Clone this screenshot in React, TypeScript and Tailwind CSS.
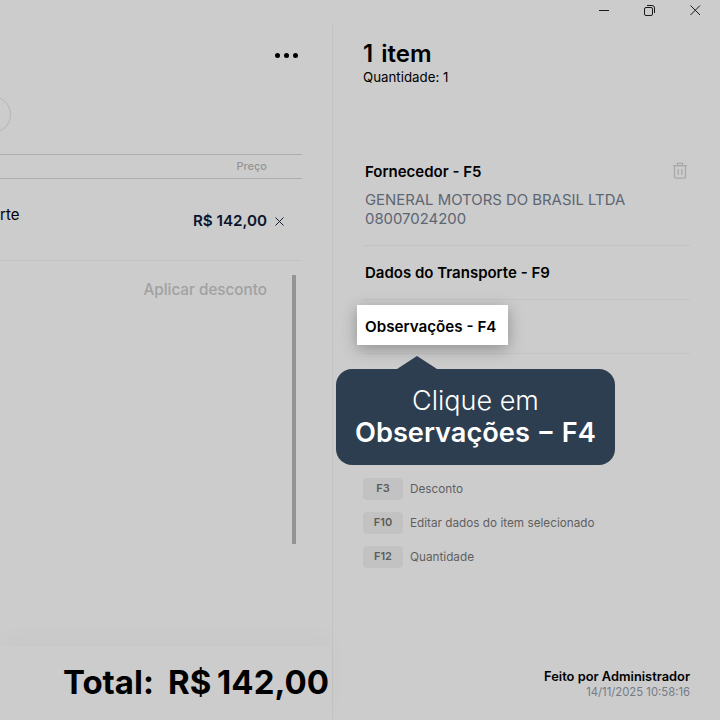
import { X } from "lucide-react";

const shortcuts = [
  { key: "F3", label: "Desconto" },
  { key: "F10", label: "Editar dados do item selecionado" },
  { key: "F12", label: "Quantidade" },
];

function WindowControls() {
  return (
    <div className="h-6 flex justify-end items-start shrink-0">
      <svg width="140" height="20" viewBox="0 0 140 20" fill="none" stroke="#1a1a1a" strokeWidth="1">
        <path d="M19 10.5h10" />
        <rect x="64.5" y="7.5" width="8" height="8" rx="1.5" />
        <path d="M67 5.5h5a2.5 2.5 0 0 1 2.5 2.5v5" />
        <path d="M110.5 5.5l9.5 9.5M120 5.5l-9.5 9.5" />
      </svg>
    </div>
  );
}

function TrashIcon() {
  return (
    <svg width="16" height="17" viewBox="0 0 16 17" fill="none" stroke="#a9a9a9" strokeWidth="1.25" className="absolute right-[2px] top-0">
      <path d="M1 3.5h14M5.5 3V1h5v2" />
      <path d="M2.5 3.5h11V15a1.2 1.2 0 0 1-1.2 1.2H3.7A1.2 1.2 0 0 1 2.5 15z" />
      <path d="M6.2 7v6M9.8 7v6" />
    </svg>
  );
}

function LeftPanel() {
  return (
    <div className="w-[333px] shrink-0 border-r border-[#c3c3c3] flex flex-col">
      <div className="h-[130px] pr-[34px] relative">
        <div className="flex justify-end gap-1 pt-[29px]">
          <span className="w-[5px] h-[5px] rounded-full bg-black" />
          <span className="w-[5px] h-[5px] rounded-full bg-black" />
          <span className="w-[5px] h-[5px] rounded-full bg-black" />
        </div>
        <div className="absolute left-[-28px] top-[72px] w-[39px] h-[37px] rounded-full border border-[#b5b5b5]" />
      </div>
      <div className="w-[302px] h-[25px] border-y border-[#adadad] flex items-center justify-end pr-[35px] text-[11px] font-medium text-[#949494]">
        Preço
      </div>
      <div className="w-[302px] h-[82px] border-b border-[#c3c3c3] relative flex items-center justify-end pr-[15px]">
        <span className="absolute left-0 top-[26px] text-[15px] leading-5 text-black">rte</span>
        <div className="flex items-center gap-[5px] pt-1 text-[15.2px] font-semibold text-[#0b1530]">
          R$ 142,00
          <X size={15} strokeWidth={1.5} className="text-[#0b1530]" />
        </div>
      </div>
      <div className="flex-1 flex min-h-0">
        <div className="w-[267px] pt-[19px] text-right text-[15.25px] font-medium leading-5 text-[#a1a1a1]">
          Aplicar desconto
        </div>
        <div className="ml-[25px] mt-[14px] w-1 h-[269px] bg-[#949494]" />
      </div>
      <div className="relative h-[74px] bg-[#cccccc] shadow-[0_-10px_20px_rgba(0,0,0,0.02)] flex items-center justify-end gap-[14px] pr-[3px] text-[33px] font-bold text-black">
        <span>Total:</span>
        <span className="[word-spacing:-2px]">R$ 142,00</span>
      </div>
    </div>
  );
}

function RightPanel() {
  return (
    <div className="flex-1 relative pl-[30px] pr-[30px]">
      <div className="text-[24px] font-semibold leading-[30px] text-black pt-[15px] [word-spacing:2px]">1 item</div>
      <div className="text-[13.3px] leading-4 text-black">Quantidade: 1</div>

      <div className="mt-[77px] pl-[2px] pb-[16px] border-b border-[#c3c3c3] relative">
        <div className="text-[15px] font-semibold leading-5 text-black">Fornecedor - F5</div>
        <div className="mt-[9px] text-[14.9px] leading-[19px] text-[#5d6673]">
          GENERAL MOTORS DO BRASIL LTDA
          <br />
          08007024200
        </div>
        <TrashIcon />
      </div>
      <div className="h-[54px] pl-[2px] pt-[2px] border-b border-[#c3c3c3] flex items-center text-[15px] font-semibold text-black">
        Dados do Transporte - F9
      </div>
      <div className="h-[54px] border-b border-[#c3c3c3]" />

      <div className="mt-[124px] flex flex-col gap-3">
        {shortcuts.map((s) => (
          <div key={s.key} className="flex items-center gap-[7px]">
            <span className="w-10 h-[22px] pb-[2px] rounded-[4px] bg-[#c2c2c2] flex items-center justify-center text-[11px] font-semibold text-[#5c5c5c]">
              {s.key}
            </span>
            <span className="pt-[2px] text-[11.75px] text-[#5f5f5f]">{s.label}</span>
          </div>
        ))}
      </div>

      <div className="absolute right-[30px] bottom-[21px] text-right">
        <div className="text-[12.85px] font-semibold leading-4 text-black">Feito por Administrador</div>
        <div className="text-[11.3px] leading-[14px] text-[#737b87]">14/11/2025 10:58:16</div>
      </div>

      {/* Highlight do passo do tour */}
      <div className="absolute left-[24px] top-[281px] w-[151px] h-10 bg-white shadow-[0_4px_16px_rgba(0,0,0,0.3)] flex items-center pl-2 pt-[4px] text-[15.2px] font-semibold text-black">
        Observações - F4
      </div>
      <div className="absolute left-[3px] top-[345px] w-[279px] h-[96px] rounded-[16px] bg-[#2c3e50] flex flex-col items-center justify-center text-white">
        <span className="text-[27px] font-light leading-8">Clique em</span>
        <span className="text-[27.2px] font-semibold leading-8">Observações − F4</span>
        <span className="absolute left-[61px] top-[-13px] w-0 h-0 border-x-[20px] border-x-transparent border-b-[13px] border-b-[#2c3e50]" />
      </div>
    </div>
  );
}

export default function App() {
  return (
    <div className="w-[720px] h-[720px] overflow-hidden bg-[#cccccc] flex flex-col font-['Inter',sans-serif]">
      <WindowControls />
      <div className="flex flex-1 min-h-0">
        <LeftPanel />
        <RightPanel />
      </div>
    </div>
  );
}
